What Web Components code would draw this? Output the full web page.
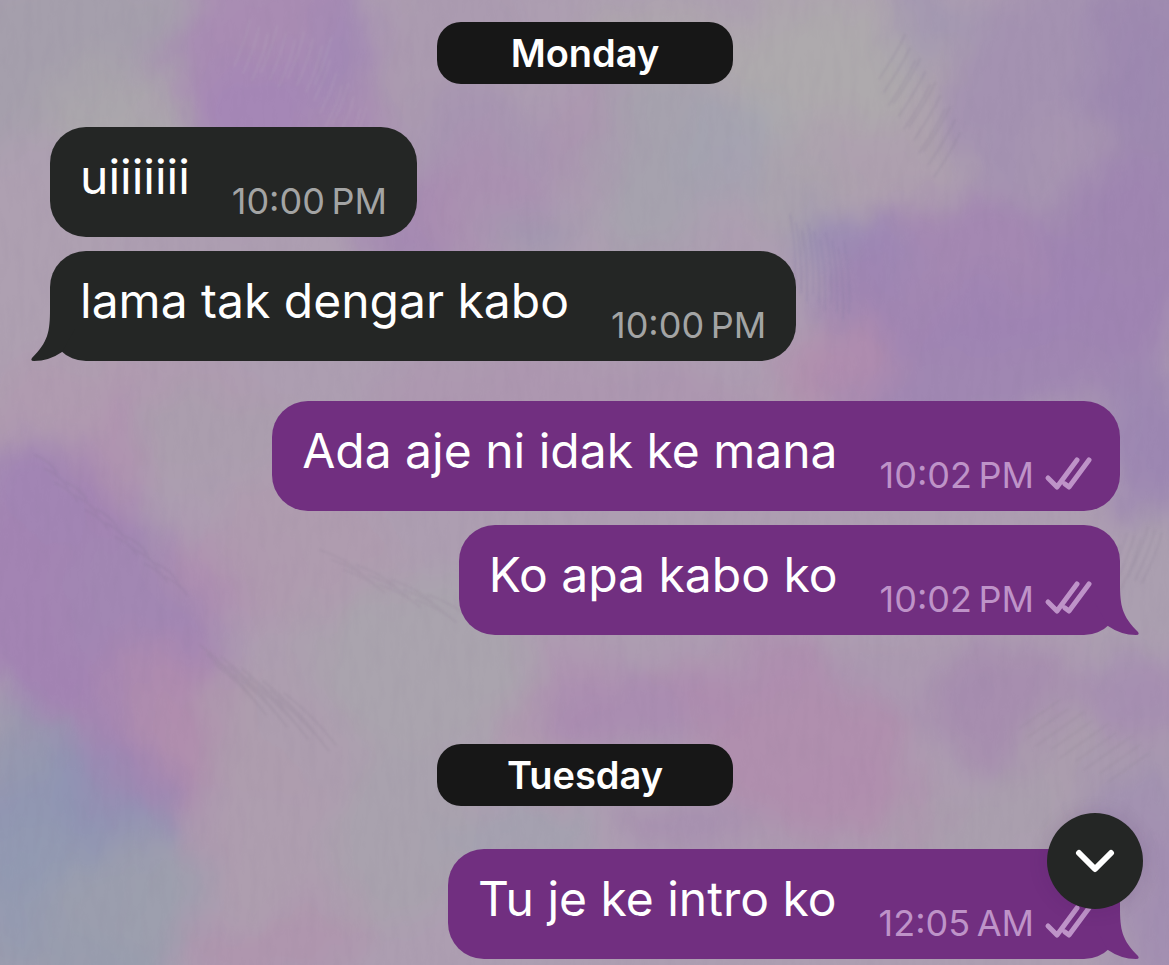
<!DOCTYPE html>
<html lang="ms">
<head>
<meta charset="utf-8">
<meta name="viewport" content="width=device-width, initial-scale=1">
<title>Chat</title>
<style>
  body { margin: 0; background: #ab9fb0; }
</style>
</head>
<body>
<chat-screen>
  <day-label>Monday</day-label>
  <message-group>
    <chat-message time="10:00 PM">uiiiiiii</chat-message>
    <chat-message time="10:00 PM" tail>lama tak dengar kabo</chat-message>
  </message-group>
  <message-group>
    <chat-message time="10:02 PM" outgoing>Ada aje ni idak ke mana</chat-message>
    <chat-message time="10:02 PM" outgoing tail>Ko apa kabo ko</chat-message>
  </message-group>
  <day-label later>Tuesday</day-label>
  <message-group>
    <chat-message time="12:05 AM" outgoing tail>Tu je ke intro ko</chat-message>
  </message-group>
  <scroll-button slot="overlay"></scroll-button>
</chat-screen>

<script>
class ChatScreen extends HTMLElement {
  constructor() {
    super();
    this.attachShadow({ mode: 'open' }).innerHTML = `
      <style>
        :host { display: block; position: relative; min-height: 100vh; overflow: hidden; box-sizing: border-box;
                font-family: Inter, "Liberation Sans", sans-serif; color: #fff; }
        main { position: relative; display: flex; flex-direction: column; padding: 22px 49px 6px 50px; }
      </style>
      <chat-wallpaper></chat-wallpaper>
      <main><slot></slot></main>
      <slot name="overlay"></slot>`;
  }
}

/* Painted pastel wallpaper: soft colour patches, brush strokes and a fine canvas grain. */
class ChatWallpaper extends HTMLElement {
  constructor() {
    super();
    const patches = [
      // cx, cy, rx, ry, rotation, colour, opacity
      [60, 60, 150, 110, 0, '#a49eac', .9],
      [110, 115, 85, 60, 0, '#aba7ac', 1],
      [20, 250, 90, 130, 0, '#aea0b1', .9],
      [260, 60, 110, 120, 10, '#a98ab4', .9],
      [240, 110, 60, 70, 0, '#a486b6', .8],
      [320, 30, 30, 60, 10, '#a088b6', .7],
      [430, 50, 70, 110, 15, '#aa9ab0', .8],
      [480, 130, 90, 60, 0, '#a693b1', .8],
      [400, 215, 55, 60, 0, '#a385b3', .8],
      [470, 190, 70, 60, 0, '#ab8eb0', .7],
      [520, 225, 40, 30, 0, '#a097b0', .8],
      [590, 120, 40, 60, 10, '#ac92b0', .8],
      [640, 140, 60, 110, 10, '#a5a2ae', .9],
      [650, 20, 100, 30, 0, '#aea7ad', .9],
      [800, 60, 95, 90, 0, '#aeaaad', 1],
      [720, 130, 50, 60, 0, '#a3a4b0', .7],
      [860, 160, 90, 60, -10, '#aea0af', 1],
      [780, 180, 60, 30, -25, '#aaa4ad', .8],
      [930, 40, 45, 80, -20, '#a096b1', .8],
      [920, 85, 40, 65, 20, '#aea3ae', .9],
      [1040, 80, 100, 130, 10, '#a390b1', .9],
      [1130, 110, 60, 160, 0, '#9c87b0', .9],
      [1060, 150, 50, 50, 40, '#a897b0', .7],
      [960, 260, 130, 75, 0, '#a385b3', .9],
      [1110, 250, 80, 100, 0, '#9e84b1', .9],
      [840, 250, 60, 40, 15, '#9b88b6', .9],
      [790, 220, 28, 22, -30, '#9a91b3', .8],
      [850, 290, 45, 50, 0, '#a084b2', .8],
      [990, 340, 180, 70, -15, '#9e84b2', .9],
      [825, 355, 65, 40, -30, '#b18cae', .8],
      [650, 375, 45, 22, 0, '#a49fae', .7],
      [1140, 430, 50, 80, 0, '#9b84b2', .9],
      [700, 390, 80, 25, 0, '#b19bae', .6],
      [1140, 580, 50, 90, 10, '#ab9fb0', 1],
      [550, 380, 200, 40, 0, '#ad95b0', .8],
      [120, 400, 150, 70, 0, '#b09ab0', .8],
      [190, 420, 90, 50, 0, '#aa9fae', .8],
      [100, 450, 28, 70, 0, '#b090b0', .7],
      [40, 570, 110, 130, -20, '#a283b3', .95],
      [20, 480, 40, 60, -30, '#a186b4', .8],
      [130, 580, 80, 70, 30, '#a287b3', .9],
      [170, 640, 45, 38, 0, '#9f82b4', .8],
      [210, 560, 55, 45, 30, '#b08fb0', .7],
      [300, 540, 100, 70, 30, '#af9baf', .8],
      [155, 705, 65, 80, 10, '#b08cae', .9],
      [60, 710, 55, 60, 10, '#a283b3', .8],
      [250, 720, 75, 70, 40, '#ae9cae', .9],
      [340, 680, 90, 90, 0, '#ad9faf', .8],
      [400, 650, 110, 90, 0, '#aaa4ae', .9],
      [100, 775, 70, 45, 20, '#9f85b3', .9],
      [20, 800, 70, 75, 0, '#8e95b3', .95],
      [0, 730, 26, 60, 0, '#9699ae', .9],
      [120, 815, 45, 30, 0, '#8f92b4', .95],
      [30, 880, 90, 70, 0, '#929ab1', .9],
      [110, 890, 80, 70, 0, '#9b9fae', .9],
      [190, 820, 40, 50, 0, '#ac98af', .8],
      [300, 850, 100, 80, 0, '#ae9daf', .9],
      [260, 930, 100, 30, -10, '#af92ae', .8],
      [40, 955, 120, 25, 0, '#979cae', .9],
      [390, 820, 70, 90, 0, '#a9a2ae', .9],
      [540, 720, 50, 60, 20, '#af98af', .8],
      [620, 690, 90, 50, 0, '#a98ab2', .85],
      [500, 820, 80, 22, 0, '#a1a2b0', .9],
      [560, 650, 50, 25, 0, '#af93b0', .7],
      [790, 720, 110, 90, 0, '#b08cae', .85],
      [740, 650, 100, 30, 0, '#ae8daf', .7],
      [680, 815, 70, 25, 0, '#a58bb0', .8],
      [840, 790, 80, 50, 0, '#b08dae', .8],
      [770, 830, 80, 22, 0, '#ac97af', .7],
      [900, 660, 80, 40, 10, '#ab98b0', .9],
      [1010, 700, 100, 70, 20, '#a58aaf', .8],
      [970, 810, 90, 50, -20, '#aa9fae', .9],
      [1090, 730, 80, 60, -30, '#ac9fae', .9],
      [1120, 800, 50, 60, 0, '#a08fb1', .8],
      [1150, 890, 40, 80, 0, '#a18cb1', .9],
      [1130, 680, 60, 45, 0, '#a58bb1', .8]
    ].map(([x, y, rx, ry, a, c, o]) =>
      `<ellipse cx="${x}" cy="${y}" rx="${rx}" ry="${ry}" transform="rotate(${a} ${x} ${y})" fill="${c}" opacity="${o}"/>`).join('');

    // Bundles of parallel bristle marks: x, y, count, step x, step y, length x, length y, colour
    const bristles = [
      [905, 35, 12, 5, 8, -26, 44, '#857a92'],
      [250, 20, 10, 9, 2, -16, 46, '#b5abbe'],
      [330, 60, 8, 6, 8, -16, 40, '#b8a8be'],
      [35, 455, 14, 10, 9, 22, 18, '#8a7898'],
      [200, 645, 13, 7, 4, 52, 52, '#8c7f92'],
      [320, 550, 10, 12, 5, 40, 22, '#948698'],
      [1085, 545, 12, 7, -2, -20, 50, '#8a7e94'],
      [790, 215, 10, 6, 3, 5, 70, '#8479a2'],
      [1060, 700, 12, 8, 4, -40, 28, '#918596']
    ].map(([x, y, n, sx, sy, dx, dy, c]) => {
      let d = '';
      for (let i = 0; i < n; i++) {
        const px = x + i * sx, py = y + i * sy + (i % 3) * 5;
        d += `M${px} ${py}q${dx / 2 + 4} ${dy / 2 - 3} ${dx} ${dy}`;
      }
      return `<path d="${d}" stroke="${c}"/>`;
    }).join('');

    this.attachShadow({ mode: 'open' }).innerHTML = `
      <style>
        :host { display: block; position: absolute; inset: 0; }
        svg { display: block; width: 100%; height: 100%; }
      </style>
      <svg viewBox="0 0 1169 965" preserveAspectRatio="none" aria-hidden="true">
        <defs>
          <filter id="soft" x="-5%" y="-5%" width="110%" height="110%" color-interpolation-filters="sRGB">
            <feGaussianBlur stdDeviation="18" result="b"/>
            <feTurbulence type="fractalNoise" baseFrequency="0.014 0.01" numOctaves="4" seed="8" result="n"/>
            <feDisplacementMap in="b" in2="n" scale="60" xChannelSelector="R" yChannelSelector="G"/>
          </filter>
          <filter id="grain" x="0" y="0" width="100%" height="100%" color-interpolation-filters="sRGB">
            <feTurbulence type="fractalNoise" baseFrequency="0.12 0.03" numOctaves="3" seed="4"/>
            <feColorMatrix values="0 0 0 0 .4  0 0 0 0 .34  0 0 0 0 .46  .9 0 0 0 -.36"/>
          </filter>
          <filter id="bristle"><feGaussianBlur stdDeviation="1"/></filter>
        </defs>
        <rect width="1169" height="965" fill="#ab9fb0"/>
        <g filter="url(#soft)"><rect x="-60" y="-60" width="1290" height="1090" fill="#ad9eb1"/><g transform="translate(16 16)">${patches}</g></g>
        <g filter="url(#bristle)" fill="none" stroke-width="2" stroke-linecap="round" opacity=".22">${bristles}</g>
        <rect width="1169" height="965" filter="url(#grain)" opacity=".08"/>
      </svg>`;
  }
}

class DayLabel extends HTMLElement {
  constructor() {
    super();
    this.attachShadow({ mode: 'open' }).innerHTML = `
      <style>
        :host { display: block; align-self: center; box-sizing: border-box; min-width: 296px; padding: 0 40px;
                border-radius: 24px; background: #171717; text-align: center; font-size: 38px;
                font-weight: 600; line-height: 62px; margin-bottom: 43px; }
        :host([later]) { margin-top: 109px; }
      </style>
      <slot></slot>`;
  }
}

class MessageGroup extends HTMLElement {
  constructor() {
    super();
    this.attachShadow({ mode: 'open' }).innerHTML = `
      <style>
        :host { display: flex; flex-direction: column; gap: 14px; }
        :host(.following) { margin-top: 40px; }
      </style>
      <slot></slot>`;
  }
  connectedCallback() {
    const before = this.previousElementSibling;
    this.classList.toggle('following', !!before && before.localName === 'message-group');
  }
}

class ChatMessage extends HTMLElement {
  constructor() {
    super();
    this.attachShadow({ mode: 'open' });
  }
  connectedCallback() {
    const out = this.hasAttribute('outgoing');
    const [clock, half] = this.getAttribute('time').split(' ');
    this.shadowRoot.innerHTML = `
      <style>
        :host { display: flex; position: relative; align-self: flex-start; align-items: flex-start; gap: 42px;
                padding: 20px 30px 14px; border-radius: 36px; background: #242625;
                --meta: #a3a4a4; }
        :host([outgoing]) { align-self: flex-end; background: #712f80; --meta: #be93c8; }
        p { margin: 0; font-size: 48px; line-height: 60px; }
        .meta { display: flex; align-items: center; gap: 10px; padding-top: 32px; color: var(--meta);
                font-size: 36px; line-height: 44px; white-space: nowrap; }
        .check { display: block; width: 46px; height: 32px; overflow: visible; }
        .tail { position: absolute; left: -19px; bottom: 0; width: 44px; height: 52px; fill: #242625; }
        :host([outgoing]) .tail { left: auto; right: -19px; fill: #712f80; transform: scaleX(-1); }
      </style>
      <p><slot></slot></p>
      <span class="meta"><time>${clock}\u202f${half}</time>${out ? `
        <svg class="check" viewBox="0 0 46 32" fill="none" stroke="currentColor" stroke-width="5" stroke-linecap="round" stroke-linejoin="round" role="img" aria-label="Read">
          <path d="M4 19L13 28L33 1M21 25L25 28L45 1"/>
        </svg>` : ''}</span>
      ${this.hasAttribute('tail') ? `
        <svg class="tail" viewBox="0 0 44 52" aria-hidden="true">
          <path d="M19 0C19 23 17 33 1 49Q-1 52 3 52Q18 52 31 43L44 20V0Z"/>
        </svg>` : ''}`;
  }
}

class ScrollButton extends HTMLElement {
  constructor() {
    super();
    this.attachShadow({ mode: 'open' }).innerHTML = `
      <style>
        :host { display: block; position: fixed; right: 26px; bottom: 56px; }
        button { display: grid; place-items: center; width: 96px; height: 96px; padding: 0; border: 0;
                 border-radius: 50%; background: #242625; color: #fff; cursor: pointer;
                 box-shadow: 0 0 20px rgba(60, 20, 80, .14); }
        svg { display: block; width: 40px; height: 24px; }
      </style>
      <button type="button" aria-label="Scroll to latest message">
        <svg viewBox="0 0 40 24" fill="none" stroke="currentColor" stroke-width="6" stroke-linecap="round" stroke-linejoin="round" aria-hidden="true">
          <path d="M4 4L20 20L36 4"/>
        </svg>
      </button>`;
  }
}

customElements.define('chat-wallpaper', ChatWallpaper);
customElements.define('chat-screen', ChatScreen);
customElements.define('day-label', DayLabel);
customElements.define('message-group', MessageGroup);
customElements.define('chat-message', ChatMessage);
customElements.define('scroll-button', ScrollButton);
</script>
</body>
</html>
